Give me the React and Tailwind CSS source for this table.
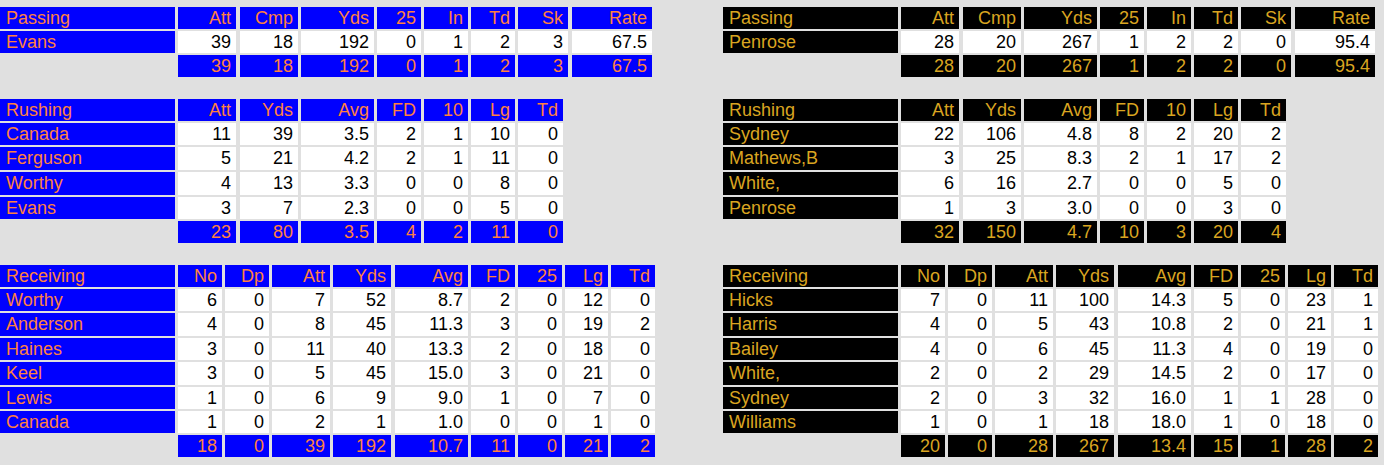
import React from "react";

const PASS_COLS = [
  "w-[175px]",
  "ml-[3px] w-[58px]",
  "ml-[4px] w-[58px]",
  "ml-[3px] w-[73px]",
  "ml-[3px] w-[44px]",
  "ml-[3px] w-[44px]",
  "ml-[3px] w-[44px]",
  "ml-[3px] w-[50px]",
  "ml-[4px] w-[80px]",
];

const RUSH_COLS = [
  "w-[175px]",
  "ml-[3px] w-[58px]",
  "ml-[4px] w-[58px]",
  "ml-[3px] w-[73px]",
  "ml-[3px] w-[44px]",
  "ml-[3px] w-[44px]",
  "ml-[3px] w-[44px]",
  "ml-[3px] w-[45px]",
];

const REC_COLS = [
  "w-[175px]",
  "ml-[3px] w-[44px]",
  "ml-[3px] w-[44px]",
  "ml-[3px] w-[58px]",
  "ml-[3px] w-[58px]",
  "ml-[4px] w-[73px]",
  "ml-[3px] w-[44px]",
  "ml-[3px] w-[44px]",
  "ml-[3px] w-[43px]",
  "ml-[3px] w-[44px]",
];

const THEMES = {
  blue: "bg-[#0000ff] text-[#ff8040]",
  black: "bg-black text-[#daa520]",
};

function Table({ cols, header, rows, totals, heights, theme }) {
  const th = THEMES[theme];
  const all = [
    { kind: "head", cells: header },
    ...rows.map((r) => ({ kind: "row", cells: r })),
    { kind: "total", cells: ["", ...totals] },
  ];
  return (
    <div className="flex flex-col gap-[2px]">
      {all.map((row, ri) => (
        <div key={ri} className={`flex ${heights[ri]}`}>
          {row.cells.map((c, ci) => {
            let cls;
            if (ci === 0) {
              cls = row.kind === "total" ? "" : `${th} pl-[6px] text-left`;
            } else if (row.kind === "row") {
              cls = "bg-white text-black pr-[5px] text-right";
            } else {
              cls = `${th} pr-[5px] text-right`;
            }
            return (
              <div
                key={ci}
                className={`${cols[ci]} ${cls} h-full text-[18px] leading-[22px] whitespace-nowrap overflow-hidden`}
              >
                {c}
              </div>
            );
          })}
        </div>
      ))}
    </div>
  );
}

const PASS_H = ["h-[22px]", "h-[22px]", "h-[22px]"];
const RUSH_H = ["h-[22px]", "h-[22px]", "h-[23px]", "h-[23px]", "h-[22px]", "h-[22px]"];
const REC_H = [
  "h-[22px]",
  "h-[22px]",
  "h-[23px]",
  "h-[22px]",
  "h-[23px]",
  "h-[22px]",
  "h-[22px]",
  "h-[22px]",
];

const SIDES = [
  {
    theme: "blue",
    passing: {
      rows: [["Evans", "39", "18", "192", "0", "1", "2", "3", "67.5"]],
      totals: ["39", "18", "192", "0", "1", "2", "3", "67.5"],
    },
    rushing: {
      rows: [
        ["Canada", "11", "39", "3.5", "2", "1", "10", "0"],
        ["Ferguson", "5", "21", "4.2", "2", "1", "11", "0"],
        ["Worthy", "4", "13", "3.3", "0", "0", "8", "0"],
        ["Evans", "3", "7", "2.3", "0", "0", "5", "0"],
      ],
      totals: ["23", "80", "3.5", "4", "2", "11", "0"],
    },
    receiving: {
      rows: [
        ["Worthy", "6", "0", "7", "52", "8.7", "2", "0", "12", "0"],
        ["Anderson", "4", "0", "8", "45", "11.3", "3", "0", "19", "2"],
        ["Haines", "3", "0", "11", "40", "13.3", "2", "0", "18", "0"],
        ["Keel", "3", "0", "5", "45", "15.0", "3", "0", "21", "0"],
        ["Lewis", "1", "0", "6", "9", "9.0", "1", "0", "7", "0"],
        ["Canada", "1", "0", "2", "1", "1.0", "0", "0", "1", "0"],
      ],
      totals: ["18", "0", "39", "192", "10.7", "11", "0", "21", "2"],
    },
  },
  {
    theme: "black",
    passing: {
      rows: [["Penrose", "28", "20", "267", "1", "2", "2", "0", "95.4"]],
      totals: ["28", "20", "267", "1", "2", "2", "0", "95.4"],
    },
    rushing: {
      rows: [
        ["Sydney", "22", "106", "4.8", "8", "2", "20", "2"],
        ["Mathews,B", "3", "25", "8.3", "2", "1", "17", "2"],
        ["White,", "6", "16", "2.7", "0", "0", "5", "0"],
        ["Penrose", "1", "3", "3.0", "0", "0", "3", "0"],
      ],
      totals: ["32", "150", "4.7", "10", "3", "20", "4"],
    },
    receiving: {
      rows: [
        ["Hicks", "7", "0", "11", "100", "14.3", "5", "0", "23", "1"],
        ["Harris", "4", "0", "5", "43", "10.8", "2", "0", "21", "1"],
        ["Bailey", "4", "0", "6", "45", "11.3", "4", "0", "19", "0"],
        ["White,", "2", "0", "2", "29", "14.5", "2", "0", "17", "0"],
        ["Sydney", "2", "0", "3", "32", "16.0", "1", "1", "28", "0"],
        ["Williams", "1", "0", "1", "18", "18.0", "1", "0", "18", "0"],
      ],
      totals: ["20", "0", "28", "267", "13.4", "15", "1", "28", "2"],
    },
  },
];

function Side({ side, className }) {
  return (
    <div className={`flex flex-col gap-[22px] ${className}`}>
      <Table
        theme={side.theme}
        cols={PASS_COLS}
        header={["Passing", "Att", "Cmp", "Yds", "25", "In", "Td", "Sk", "Rate"]}
        rows={side.passing.rows}
        totals={side.passing.totals}
        heights={PASS_H}
      />
      <Table
        theme={side.theme}
        cols={RUSH_COLS}
        header={["Rushing", "Att", "Yds", "Avg", "FD", "10", "Lg", "Td"]}
        rows={side.rushing.rows}
        totals={side.rushing.totals}
        heights={RUSH_H}
      />
      <Table
        theme={side.theme}
        cols={REC_COLS}
        header={["Receiving", "No", "Dp", "Att", "Yds", "Avg", "FD", "25", "Lg", "Td"]}
        rows={side.receiving.rows}
        totals={side.receiving.totals}
        heights={REC_H}
      />
    </div>
  );
}

export default function App() {
  return (
    <div
      className="w-[1384px] h-[465px] bg-[#e0e0e0] pt-[7px] flex overflow-hidden"
      style={{ fontFamily: '"Liberation Sans", Arial, sans-serif' }}
    >
      <Side side={SIDES[0]} className="w-[723px] shrink-0" />
      <Side side={SIDES[1]} className="flex-1" />
    </div>
  );
}
